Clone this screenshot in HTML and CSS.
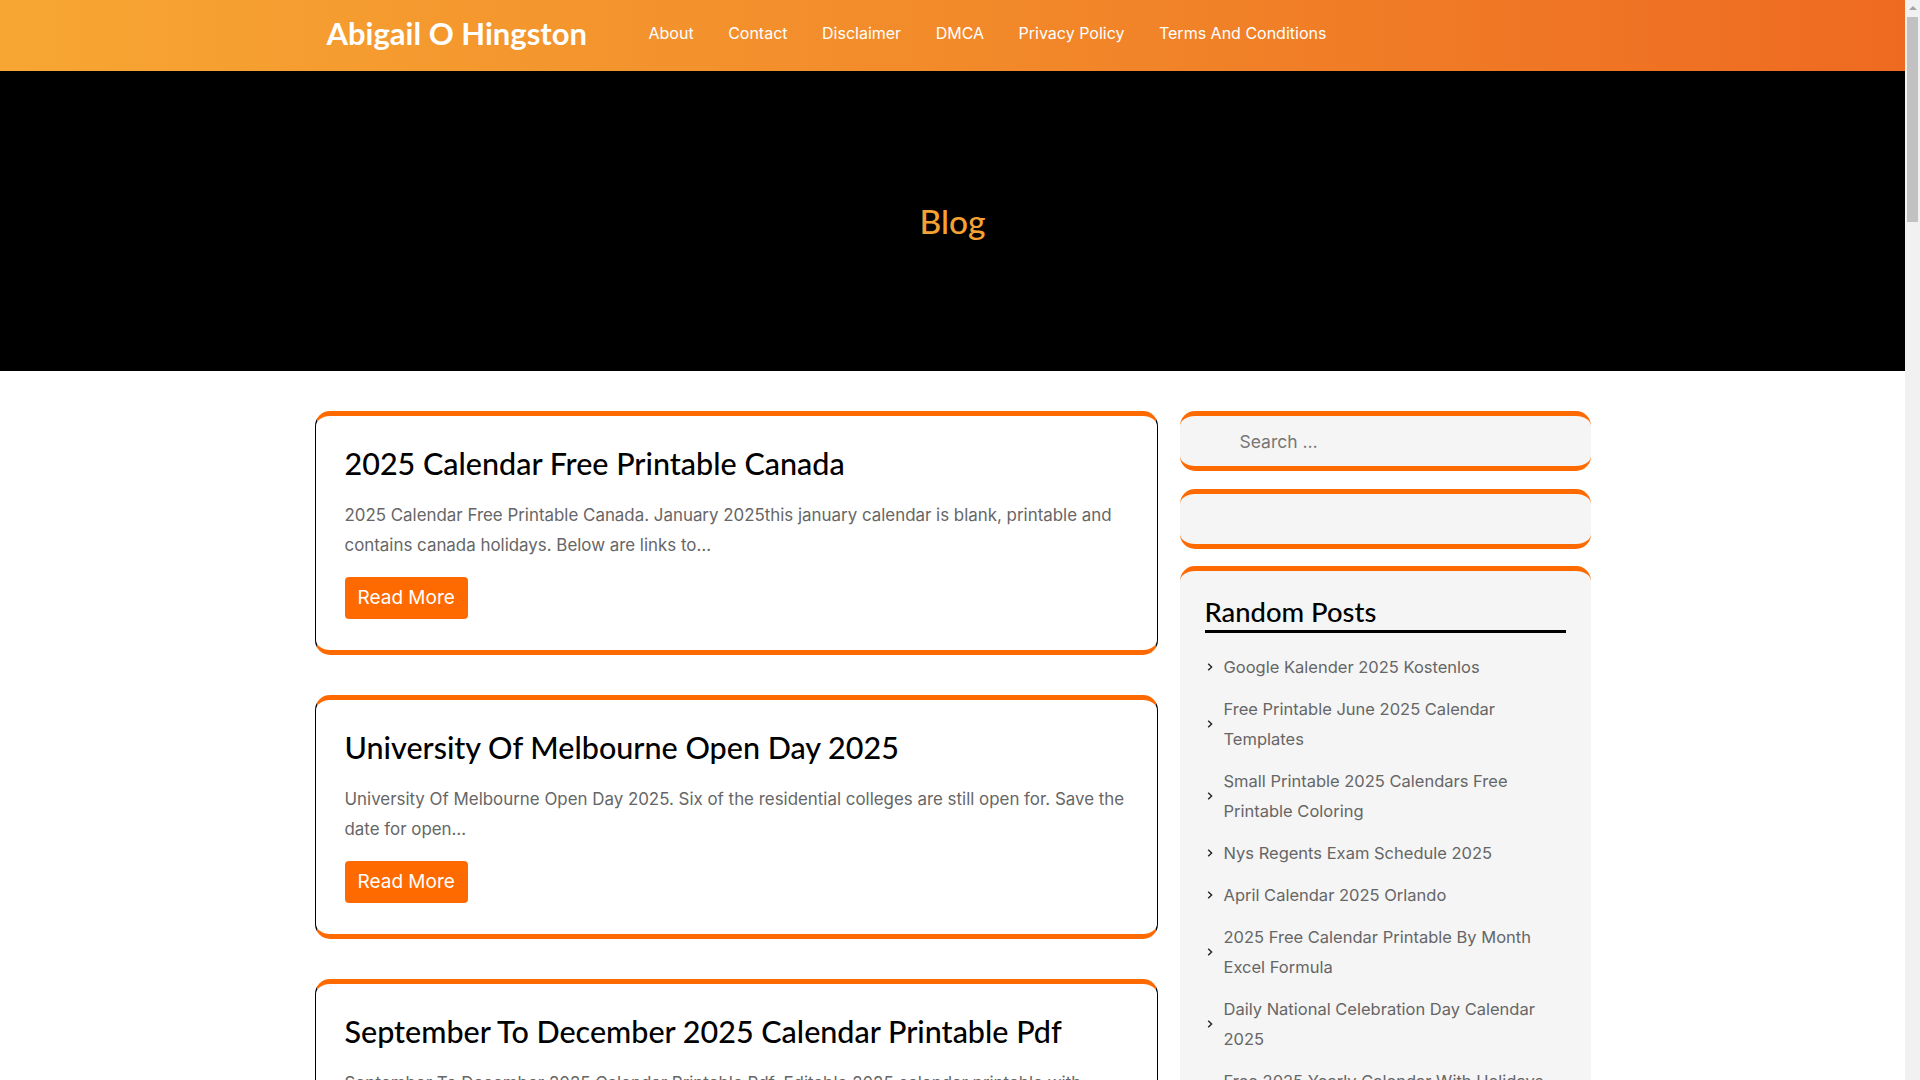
FILE: index.html
```html
<!DOCTYPE html>
<html lang="en">
<head>
<meta charset="utf-8">
<title>Blog – Abigail O Hingston</title>
<link rel="stylesheet" href="styles.css">
</head>
<body>
<header class="site-header">
  <div class="header-inner">
    <a class="logo" href="#">Abigail O Hingston</a>
    <nav class="nav">
      <a href="#">About</a>
      <a href="#">Contact</a>
      <a href="#">Disclaimer</a>
      <a href="#">DMCA</a>
      <a href="#">Privacy Policy</a>
      <a href="#">Terms And Conditions</a>
    </nav>
  </div>
</header>

<section class="hero">
  <h1 class="hero-title">Blog</h1>
</section>

<div class="container">
  <main class="posts">
    <article class="card">
      <h2 class="card-title">2025 Calendar Free Printable Canada</h2>
      <p class="card-excerpt">2025 Calendar Free Printable Canada. January 2025this january calendar is blank, printable and contains canada holidays. Below are links to…</p>
      <a class="btn" href="#">Read More</a>
    </article>
    <article class="card">
      <h2 class="card-title">University Of Melbourne Open Day 2025</h2>
      <p class="card-excerpt">University Of Melbourne Open Day 2025. Six of the residential colleges are still open for. Save the date for open…</p>
      <a class="btn" href="#">Read More</a>
    </article>
    <article class="card">
      <h2 class="card-title">September To December 2025 Calendar Printable Pdf</h2>
      <p class="card-excerpt">September To December 2025 Calendar Printable Pdf. Editable 2025 calendar printable with holidays and notes for every month of…</p>
      <a class="btn" href="#">Read More</a>
    </article>
  </main>

  <aside class="sidebar">
    <div class="widget widget-search">
      <input class="search-field" type="search" placeholder="Search …">
    </div>
    <div class="widget widget-empty"></div>
    <div class="widget widget-posts">
      <h2 class="widget-title">Random Posts</h2>
      <ul class="post-list">
        <li><span class="chev"><svg viewBox="0 0 10 10" width="10" height="10"><path d="M3.2 1.8 L6.6 5 L3.2 8.2" fill="none" stroke="#222" stroke-width="1.4"/></svg></span><a href="#">Google Kalender 2025 Kostenlos</a></li>
        <li><span class="chev"><svg viewBox="0 0 10 10" width="10" height="10"><path d="M3.2 1.8 L6.6 5 L3.2 8.2" fill="none" stroke="#222" stroke-width="1.4"/></svg></span><a href="#">Free Printable June 2025 Calendar Templates</a></li>
        <li><span class="chev"><svg viewBox="0 0 10 10" width="10" height="10"><path d="M3.2 1.8 L6.6 5 L3.2 8.2" fill="none" stroke="#222" stroke-width="1.4"/></svg></span><a href="#">Small Printable 2025 Calendars Free Printable Coloring</a></li>
        <li><span class="chev"><svg viewBox="0 0 10 10" width="10" height="10"><path d="M3.2 1.8 L6.6 5 L3.2 8.2" fill="none" stroke="#222" stroke-width="1.4"/></svg></span><a href="#">Nys Regents Exam Schedule 2025</a></li>
        <li><span class="chev"><svg viewBox="0 0 10 10" width="10" height="10"><path d="M3.2 1.8 L6.6 5 L3.2 8.2" fill="none" stroke="#222" stroke-width="1.4"/></svg></span><a href="#">April Calendar 2025 Orlando</a></li>
        <li><span class="chev"><svg viewBox="0 0 10 10" width="10" height="10"><path d="M3.2 1.8 L6.6 5 L3.2 8.2" fill="none" stroke="#222" stroke-width="1.4"/></svg></span><a href="#">2025 Free Calendar Printable By Month Excel Formula</a></li>
        <li><span class="chev"><svg viewBox="0 0 10 10" width="10" height="10"><path d="M3.2 1.8 L6.6 5 L3.2 8.2" fill="none" stroke="#222" stroke-width="1.4"/></svg></span><a href="#">Daily National Celebration Day Calendar 2025</a></li>
        <li><span class="chev"><svg viewBox="0 0 10 10" width="10" height="10"><path d="M3.2 1.8 L6.6 5 L3.2 8.2" fill="none" stroke="#222" stroke-width="1.4"/></svg></span><a href="#">Free 2025 Yearly Calendar With Holidays Printable</a></li>
      </ul>
    </div>
  </aside>
</div>

<div class="scrollbar" aria-hidden="true">
  <div class="scroll-arrow"></div>
  <div class="scroll-thumb"></div>
</div>
</body>
</html>
```

FILE: styles.css
```css
* { box-sizing: border-box; }

body {
  margin: 0 15px 0 0;
  background: #fff;
  font-family: "Inter", "Noto Sans", sans-serif;
  color: #666;
}

a { text-decoration: none; color: inherit; }

/* Header */
.site-header {
  height: 71px;
  background: linear-gradient(to right, #f7a633 0%, #f28a2a 50%, #ee6a21 100%);
}

.header-inner {
  width: 1276px;
  margin: 0 auto;
  height: 100%;
  padding: 0 0 6px 12px;
  display: flex;
  align-items: center;
}

.logo {
  width: 322px;
  flex: 0 0 auto;
  font-family: "Lato", "Noto Sans", sans-serif;
  font-weight: 700;
  font-size: 31px;
  color: #fff;
}

.nav {
  display: flex;
  gap: 34.5px;
}

.nav a {
  font-size: 16px;
  color: #fff;
}

/* Hero */
.hero {
  height: 300px;
  background: #000;
  display: flex;
  align-items: center;
  justify-content: center;
}

.hero-title {
  margin: 0;
  font-family: "Lato", "Noto Sans", sans-serif;
  font-weight: 500;
  font-size: 33.5px;
  color: #f5a133;
}

/* Layout */
.container {
  width: 1276px;
  margin: 40px auto 0;
  display: grid;
  grid-template-columns: 843px 411px;
  column-gap: 22px;
  align-items: start;
}

/* Cards */
.card {
  border: 1px solid #000;
  border-top: 5px solid #ff6a00;
  border-bottom: 5px solid #ff6a00;
  border-radius: 15px;
  padding: 28px 29px 31px;
  margin-bottom: 40px;
  background: #fff;
}

.card-title {
  margin: 0;
  font-family: "Lato", "Noto Sans", sans-serif;
  font-weight: 500;
  font-size: 30.5px;
  line-height: 38px;
  color: #000;
}

.card-excerpt {
  margin: 18px 0 17px;
  font-size: 16.9px;
  line-height: 30px;
  color: #666;
}

.btn {
  display: inline-block;
  height: 42px;
  line-height: 42px;
  padding: 0 13px;
  background: #ff6a00;
  color: #fff;
  border-radius: 4px;
  font-size: 19px;
}

/* Sidebar */
.widget {
  background: #f5f5f5;
  border-top: 5px solid #ff6a00;
  border-bottom: 5px solid #ff6a00;
  border-radius: 15px;
  margin-bottom: 18px;
}

.widget-search { height: 60px; }

.search-field {
  width: 100%;
  height: 50px;
  border: none;
  background: transparent;
  padding: 0 0 0 60px;
  font-family: "Inter", "Noto Sans", sans-serif;
  font-size: 17.5px;
  color: #777;
  outline: none;
}

.search-field::placeholder { color: #777; }

.widget-empty { height: 60px; margin-bottom: 17px; }

.widget-posts { padding: 24px 25px 10px 25px; }

.widget-title {
  margin: 0 0 19px;
  font-family: "Lato", "Noto Sans", sans-serif;
  font-weight: 500;
  font-size: 27.4px;
  line-height: 34px;
  color: #000;
  border-bottom: 3px solid #000;
  padding-bottom: 1px;
}

.post-list {
  list-style: none;
  margin: 0;
  padding: 0;
}

.post-list li {
  display: flex;
  align-items: center;
  margin-bottom: 12px;
  font-size: 16.5px;
  line-height: 30px;
  color: #666;
}

.chev {
  flex: 0 0 19px;
  display: flex;
  align-items: center;
}

/* Fake window scrollbar (drawn over the right edge) */
.scrollbar {
  position: fixed;
  top: 0;
  right: 0;
  width: 15px;
  height: 100vh;
  background: #f1f1f1;
}

.scroll-arrow {
  height: 15px;
  display: flex;
  align-items: center;
  justify-content: center;
}

.scroll-arrow::before {
  content: "";
  width: 0;
  height: 0;
  border-left: 4px solid transparent;
  border-right: 4px solid transparent;
  border-bottom: 4px solid #a3a3a3;
}

.scroll-thumb {
  margin: 2px 2px 0;
  height: 205px;
  background: #c1c1c1;
}
```
